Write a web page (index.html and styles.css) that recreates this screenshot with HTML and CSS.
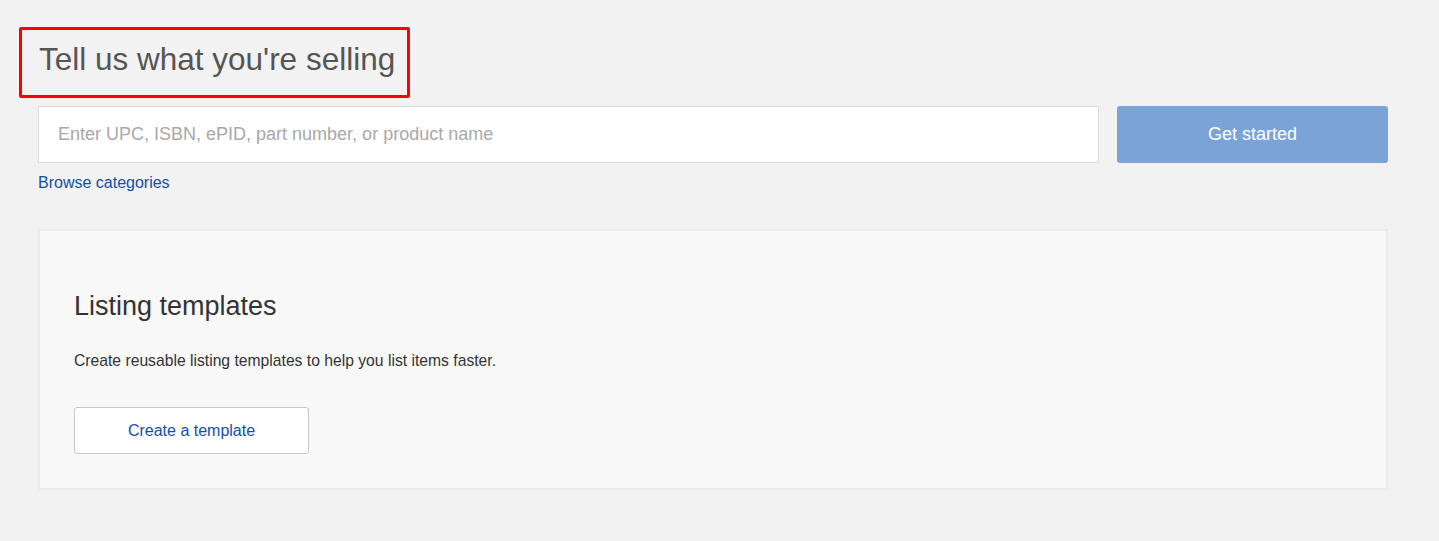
FILE: index.html
```html
<!DOCTYPE html>
<html lang="en">
<head>
    <meta charset="UTF-8">
    <meta name="viewport" content="width=device-width, initial-scale=1.0">
    <title>Tell us what you're selling</title>
    <link rel="stylesheet" href="styles.css">
</head>
<body>
    <div class="page">
        <h1 class="title">Tell us what you're selling</h1>

        <div class="search-row">
            <input class="search-input" type="text" placeholder="Enter UPC, ISBN, ePID, part number, or product name">
            <button class="start-btn">Get started</button>
        </div>
        <a class="browse-link" href="#">Browse categories</a>

        <div class="card">
            <h2 class="card-title">Listing templates</h2>
            <p class="card-text">Create reusable listing templates to help you list items faster.</p>
            <button class="template-btn">Create a template</button>
        </div>
    </div>
</body>
</html>
```

FILE: styles.css
```css
body {
    margin: 0;
    background-color: #f2f2f2;
    font-family: Arial, "Liberation Sans", sans-serif;
}
.page {
    display: flex;
    flex-direction: column;
    align-items: flex-start;
    padding: 27px 51px 0 38px;
}
.title {
    margin: 0 0 0 -19px;
    height: 59px;
    line-height: 59px;
    padding: 0 12px 6px 17px;
    border: 3px solid #f00;
    border-radius: 2px;
    font-size: 31.5px;
    font-weight: normal;
    color: #555;
}
.search-row {
    display: flex;
    gap: 18px;
    align-self: stretch;
    margin-top: 8px;
}
.search-input {
    flex: 1;
    box-sizing: border-box;
    height: 57px;
    margin: 0;
    padding: 0 19px;
    border: 1px solid #dcdcdc;
    border-radius: 0;
    background-color: #fff;
    font-family: inherit;
    font-size: 18px;
    color: #333;
    outline: none;
}
.search-input::placeholder {
    color: #a8a8a8;
}
.start-btn {
    width: 271px;
    height: 57px;
    border: none;
    border-radius: 3px;
    background-color: #7aa3d8;
    color: #fff;
    font-family: inherit;
    font-size: 18px;
    cursor: pointer;
}
.browse-link {
    margin-top: 11px;
    font-size: 16px;
    line-height: 18px;
    color: #1350a4;
    text-decoration: none;
}
.card {
    align-self: stretch;
    margin-top: 37px;
    padding: 60px 34px 34px 34px;
    border: 2px solid #ebebeb;
    background-color: #f8f8f8;
}
.card-title {
    margin: 0;
    font-size: 27px;
    line-height: 30px;
    font-weight: normal;
    color: #333;
}
.card-text {
    margin: 31px 0 0 0;
    font-size: 15.7px;
    line-height: 18px;
    color: #333;
}
.template-btn {
    margin-top: 37px;
    width: 235px;
    height: 47px;
    border: 1px solid #c8c8c8;
    border-radius: 3px;
    background-color: #fff;
    color: #1350a4;
    font-family: inherit;
    font-size: 16px;
    cursor: pointer;
}
```
